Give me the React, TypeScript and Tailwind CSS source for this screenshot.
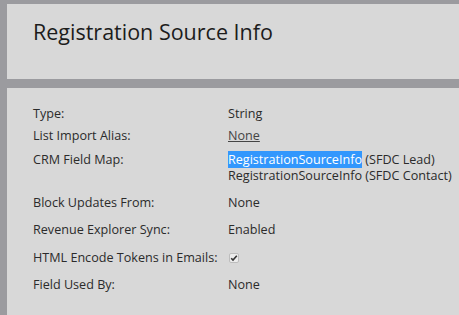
import React from "react";

const font = { fontFamily: '"Open Sans", "Noto Sans", sans-serif' };

function Row({ label, children, h }: { label: string; children: React.ReactNode; h: string }) {
  return (
    <div className={`flex ${h}`}>
      <div className="w-[195px] shrink-0 leading-[16px]">{label}</div>
      <div className="leading-[16px]">{children}</div>
    </div>
  );
}

export default function App() {
  return (
    <div className="w-[459px] h-[315px] bg-[#9b9b9f] pl-[7px] pt-[4px] overflow-hidden text-[#2b2b2b]" style={font}>
      <div className="h-[75px] bg-[#d8d8d8] pl-[26px] pt-[13px]">
        <div className="text-[21.5px] leading-[30px] text-[#1c1c1c]">Registration Source Info</div>
      </div>
      <div className="mt-[9px] h-[240px] bg-[#d8d8d8] pl-[26px] pt-[18px] text-[12.6px]">
        <div className="flex flex-col">
          <Row label="Type:" h="h-[22px]">String</Row>
          <Row label="List Import Alias:" h="h-[24px]">
            <span className="underline text-[#444]">None</span>
          </Row>
          <Row label="CRM Field Map:" h="h-[43px]">
            <div className="whitespace-nowrap">
              <span className="bg-[#3297fd] text-white">RegistrationSourceInfo</span> (SFDC Lead)
            </div>
            <div className="whitespace-nowrap">RegistrationSourceInfo (SFDC Contact)</div>
          </Row>
          <Row label="Block Updates From:" h="h-[27px]">None</Row>
          <Row label="Revenue Explorer Sync:" h="h-[28px]">Enabled</Row>
          <Row label="HTML Encode Tokens in Emails:" h="h-[27px]">
            <span className="inline-flex items-center justify-center w-[10px] h-[10px] mt-[3px] ml-[1px] border border-[#bdbdbd] bg-[#ececec] rounded-[2px]">
              <svg width="8" height="8" viewBox="0 0 8 8">
                <path d="M1.2 4.2 L3 6 L6.8 1.8" stroke="#333" strokeWidth="1.6" fill="none" />
              </svg>
            </span>
          </Row>
          <Row label="Field Used By:" h="h-[20px]">None</Row>
        </div>
      </div>
    </div>
  );
}
